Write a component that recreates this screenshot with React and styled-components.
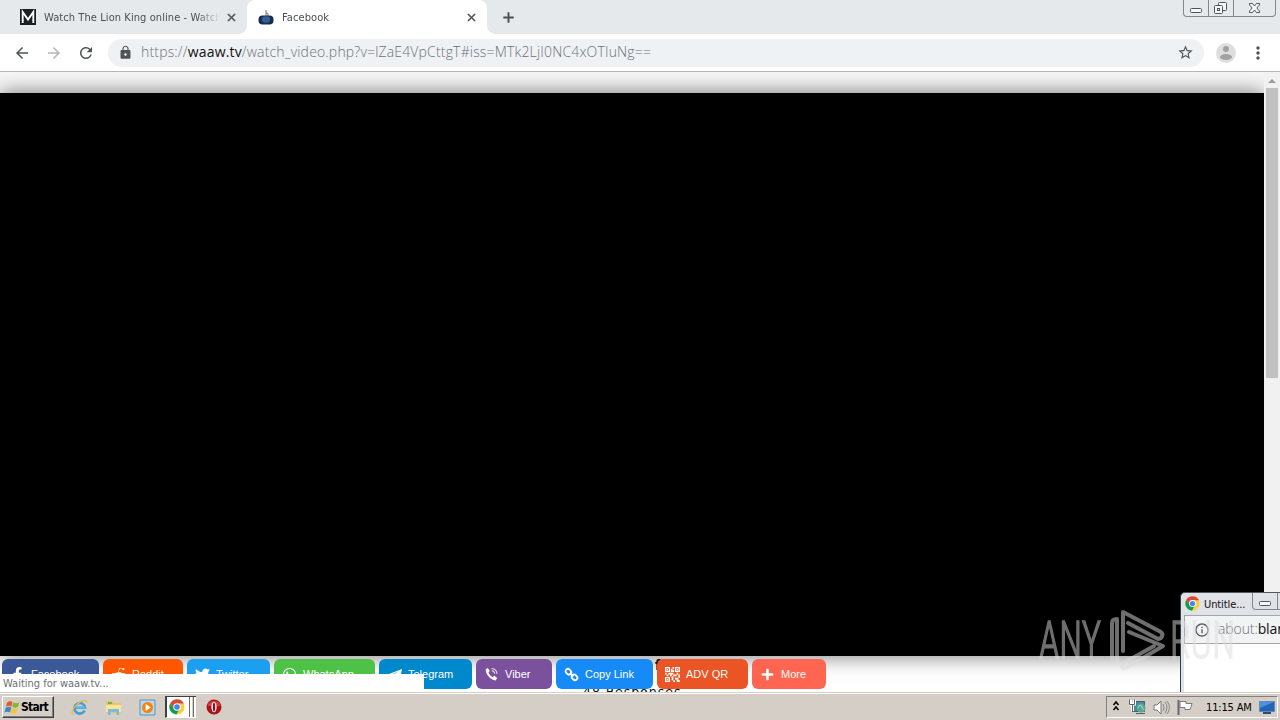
import React from "react";
import styled, { createGlobalStyle } from "styled-components";
import {
  MdArrowBack,
  MdArrowForward,
  MdRefresh,
  MdLock,
  MdStarBorder,
  MdMoreVert,
  MdClose,
  MdAdd,
  MdInfoOutline,
  MdQrCode2
} from "react-icons/md";
import {
  FaFacebookF,
  FaRedditAlien,
  FaTwitter,
  FaWhatsapp,
  FaPlus
} from "react-icons/fa";

const GlobalStyle = createGlobalStyle`
  * {
    box-sizing: border-box;
  }

  body {
    margin: 0;
    overflow: hidden;
  }

  svg {
    display: block;
    flex: none;
  }
`;

const Desktop = styled.div`
  position: relative;
  display: flex;
  flex-direction: column;
  width: 1280px;
  height: 720px;
  overflow: hidden;
  background: #fff;
  font-family: "DejaVu Sans Condensed", "DejaVu Sans", sans-serif;
  font-stretch: condensed;
  font-size: 11px;
`;

const Text = styled.span`
  white-space: nowrap;
  letter-spacing: ${p => p.$spacing || 0}px;
`;

/* browser chrome */

const TabStrip = styled.div`
  display: flex;
  height: 34px;
  background: #e5e9ec;
`;

const Tab = styled.div`
  position: relative;
  display: flex;
  align-items: center;
  width: ${p => p.$width}px;
  padding: 0 9px 0 ${p => p.$left}px;
  color: #4b4f54;
  background: ${p => (p.$active ? "#fff" : "transparent")};
  border-radius: 8px 8px 0 0;

  & > svg:last-child path:last-child {
    stroke: currentColor;
    stroke-width: 1px;
  }

  &::before,
  &::after {
    content: ${p => (p.$active ? '""' : "none")};
    position: absolute;
    bottom: 0;
    width: 8px;
    height: 8px;
  }

  &::before {
    left: -8px;
    background: radial-gradient(circle at 0 0, transparent 7.5px, #fff 8px);
  }

  &::after {
    right: -8px;
    background: radial-gradient(circle at 100% 0, transparent 7.5px, #fff 8px);
  }
`;

const TabTitle = styled(Text)`
  flex: 1;
  margin-left: 8px;
  overflow: hidden;
  mask-image: linear-gradient(
    to right,
    #000 calc(100% - ${p => p.$fade || 0}px),
    transparent calc(100% - ${p => (p.$fade ? 5 : 0)}px)
  );
`;

const NewTab = styled.div`
  padding: 9px 0 0 13px;
  color: #4d5156;

  & path:last-child {
    stroke: currentColor;
    stroke-width: 0.7px;
  }
`;

const Caption = styled.div`
  display: flex;
  width: ${p => p.$width}px;
  height: 17px;
  margin-left: auto;
  margin-right: ${p => p.$right || 0}px;
  border: 1px solid #83878b;
  border-top: 0;
  border-radius: 0 0 4px 4px;

  & > svg + svg {
    border-left: 1px solid #83878b;
  }
`;

const Toolbar = styled.div`
  display: flex;
  align-items: center;
  height: 38px;
  padding-left: 13px;
  border-bottom: 1px solid #b5b6b6;
  color: #505458;

  & > svg {
    margin-right: 14px;
  }
`;

const Omnibox = styled.div`
  display: flex;
  flex: none;
  align-items: center;
  width: 1096px;
  height: 28px;
  margin-left: -1px;
  padding: 0 10px;
  border-radius: 14px;
  background: #eff2f5;
`;

const Url = styled(Text)`
  flex: 1;
  margin: -2px 0 0 8px;
  color: #6d7175;
  font: 300 14px "Open Sans", sans-serif;

  & b {
    color: #111;
    font-weight: 400;
  }
`;

const Avatar = styled.div`
  margin-left: 12px;
  margin-right: 12px;
`;

/* page content */

const Viewport = styled.div`
  display: flex;
  height: 620px;
`;

const Page = styled.div`
  position: relative;
  width: 1264px;
  overflow: hidden;
`;

const Header = styled.div`
  height: 21px;
  background: #f7f7f7;
`;

const Player = styled.div`
  position: relative;
  height: 563px;
  background: #000;
  box-shadow: 0 0 20px rgba(0, 0, 0, 0.55);
`;

const ShareBar = styled.div`
  position: absolute;
  left: 2px;
  top: 587px;
  display: flex;
  gap: 4px;
`;

const ShareButton = styled.div`
  display: flex;
  align-items: center;
  width: ${p => p.$width}px;
  height: 30px;
  padding-left: 8px;
  border-radius: 6px;
  background: ${p => p.$color};
  color: #fff;
  font-family: "Liberation Sans", sans-serif;

  & svg {
    width: 15px;
    height: 15px;
    margin-right: 6px;
  }
`;

const Responses = styled.div`
  position: absolute;
  left: 583px;
  top: 611px;
  font-size: 14px;
  line-height: 18px;
  color: #111;
`;

const Clipped = styled(Responses)`
  left: 655px;
  top: 584px;
  font-weight: 700;
`;

const StatusBubble = styled.div`
  position: absolute;
  left: 0;
  bottom: 0;
  width: 424px;
  height: 18px;
  padding-left: 3px;
  line-height: 19px;
  background: #fff;
  color: #6c6f76;
`;

const Scrollbar = styled.div`
  width: 16px;
  background: #f1f1f1;
`;

const ScrollUp = styled.div`
  width: 0;
  margin: 7px 4px 5px;
  border: 4px solid transparent;
  border-top: 0;
  border-bottom-color: #9a9a9a;
`;

const Thumb = styled.div`
  height: 290px;
  margin: 0 2px 0 2px;
  background: #c1c1c1;
`;

/* popup window */

const Popup = styled.div`
  position: absolute;
  left: 1180px;
  top: 592px;
  width: 120px;
  height: 100px;
  padding-left: 3px;
  border-left: 1px solid #3b3d40;
  border-top: 1px solid #55585b;
  border-radius: 5px 0 0 0;
  background: #dfe2e6;
`;

const PopupTitle = styled.div`
  display: flex;
  height: 22px;
  color: #111;

  & > svg {
    margin: 3px 4px 0 1px;
  }

  & > span {
    line-height: 23px;
  }
`;

const PopupUrl = styled.div`
  display: flex;
  align-items: center;
  height: 29px;
  padding-left: 9px;
  border: 1px solid #a4a7aa;
  background: #f2f3f5;
  color: #55595d;
`;

const PopupBody = styled.div`
  height: 48px;
  background: #fff;
`;

const Watermark = styled.svg`
  position: absolute;
  left: 1036px;
  top: 606px;
`;

/* taskbar */

const Taskbar = styled.div`
  display: flex;
  align-items: center;
  height: 28px;
  border-top: 1px solid #d4d0c8;
  box-shadow: inset 0 1px #fff;
  background: #d4cec7;
  padding-top: 1px;
`;

const StartButton = styled.div`
  display: flex;
  align-items: center;
  width: 52px;
  height: 22px;
  margin-left: 2px;
  padding-left: 1px;
  border: 1px solid;
  border-color: #fff #404040 #404040 #fff;
  box-shadow: inset -1px -1px #808080;
  color: #000;
  font-size: 12px;
  font-weight: 700;
`;

const QuickLaunch = styled.div`
  display: flex;
  align-items: center;
  margin-left: 17px;
  gap: 17px;
`;

const RunningApp = styled.div`
  display: flex;
  align-items: center;
  width: 31px;
  height: 22px;
  margin: 0 -7px 0 -8px;
  border-top: 1px solid #404040;
  border-left: 2px solid #404040;
  border-bottom: 1px solid #fff;
  background: linear-gradient(
    to right,
    #fff 22px,
    #706d69 22px 23px,
    #fff 23px 25px,
    #d4cec7 25px 26px,
    #706d69 26px 27px,
    #fff 27px 29px
  );

  & > svg {
    margin-left: 2px;
  }
`;

const Tray = styled.div`
  display: flex;
  align-items: center;
  width: 172px;
  height: 22px;
  margin-left: auto;
  margin-right: 2px;
  padding-left: 5px;
  border: 1px solid;
  border-color: #808080 #fff #fff #808080;
  color: #000;

  & > span {
    margin: 0 7px 0 12px;
  }
`;

const ChromeLogo = ({ size = 16 }) => (
  <svg width={size} height={size} viewBox="0 0 16 16">
    <circle cx="8" cy="8" r="7.6" fill="#ffcd40" />
    <path d="M1.3 4.2A7.7 7.7 0 0 1 14.9 4.5H8L4.8 9.7z" fill="#df4937" />
    <path d="M1.3 4.2A7.7 7.7 0 0 0 7.4 15.6L10.8 9.7H4.9z" fill="#109d58" />
    <circle cx="8" cy="8" r="3.7" fill="#fff" />
    <circle cx="8" cy="8" r="2.8" fill="#4286f5" />
  </svg>
);

const MinimizeGlyph = ({ width = 24 }) => (
  <svg width={width} height="16">
    <rect
      x="6.5"
      y="8.5"
      width="11"
      height="4"
      rx="1"
      fill="#f5f6f7"
      stroke="#50545d"
    />
  </svg>
);

const RestoreGlyph = () => (
  <svg width="25" height="16" fill="#f5f6f7" stroke="#50545d">
    <rect x="9.5" y="2.5" width="8" height="8" rx="1" />
    <rect x="5.5" y="5.5" width="8" height="8" rx="1" />
    <rect x="8.5" y="8.5" width="2" height="2" />
  </svg>
);

const CloseGlyph = () => (
  <svg width="42" height="16">
    <path
      d="M15.5 3.5h3l2 2.5 2-2.5h3V5l-2.7 3 2.7 3v1.5h-3l-2-2.5-2 2.5h-3V11l2.7-3-2.7-3z"
      fill="#f5f6f7"
      stroke="#50545d"
    />
  </svg>
);

const MovieFavicon = () => (
  <svg width="16" height="16" viewBox="0 0 16 16">
    <path d="M0 0h16v16H0z" fill="#1b1f22" />
    <path d="M2.7 14V3L8 10.500 13.300 3v11" fill="none" stroke="#fff" strokeWidth="1.9" />
  </svg>
);

const HookahFavicon = () => (
  <svg width="16" height="16" viewBox="0 0 16 16">
    <path d="M8 1v7M8 3.500l2 1.500v4" fill="none" stroke="#8b9097" strokeWidth="1.2" />
    <rect x=".5" y="6.5" width="15" height="9" rx="4" fill="#182d49" />
    <ellipse cx="8" cy="10.5" rx="4.2" ry="3.2" fill="#315f98" />
  </svg>
);

const TelegramGlyph = () => (
  <svg viewBox="0 0 16 16" fill="#fff">
    <path d="M0 8.200 16 2l-2.500 12.500-5-3.500-2.500 2.300-.5-4.200L13 4 4 8.900z" />
  </svg>
);

const ViberGlyph = () => (
  <svg viewBox="0 0 16 16" fill="none" stroke="#fff">
    <path
      d="M2 2.200 4 1l2.200 3-1.400 1.800C5.800 8.300 7 9.600 9.200 10.600L11 9.300l3 2.300-1.300 2.600c-1.500 1-9.600-3.200-10.700-9.700z"
      fill="#fff"
      stroke="none"
    />
    <path
      d="M8 1.500c3.600.2 5.800 2.500 5.800 6M8.300 4c2 .2 3 1.200 3.100 3.200"
      strokeWidth="1.1"
      opacity="0.8"
    />
  </svg>
);

const ChainGlyph = () => (
  <svg viewBox="0 0 16 16" fill="none" stroke="#fff" strokeWidth="1.9">
    <rect x="1.5" y="2.5" width="6.5" height="5" rx="2.5" transform="rotate(45 4.7 5)" />
    <rect x="8" y="8.5" width="6.5" height="5" rx="2.5" transform="rotate(45 11.2 11)" />
    <path d="m6 6.500 4 3.500" />
  </svg>
);

const WindowsFlag = () => (
  <svg width="17" height="17" viewBox="0 0 17 16">
    <path d="M3 3c2-1.500 4-1.500 5.500-.3L7.500 7C5.800 6 4 6.200 2 7.200z" fill="#e9592b" />
    <path d="M9.300 3c2 1.200 4 1 6-.2l-1.300 4.500c-2 1.200-4 1.200-5.700 0z" fill="#7db83d" />
    <path d="M1.700 8.300c2-1.200 4-1.200 5.600-.2l-1.300 5C4.500 12 2.500 12 .5 13z" fill="#3b86cf" />
    <path d="M8 8.400c2 1.200 4 1 5.800 0l-1.400 4.800c-2 1.200-4 1-5.700 0z" fill="#fbc62d" />
  </svg>
);

const ExplorerIcon = () => (
  <svg width="17" height="17" viewBox="0 0 17 17" fill="none">
    <path
      d="M13.700 11.500a5.300 5.300 0 1 1 .4-3H5"
      stroke="#3d9fde"
      strokeWidth="2.6"
    />
    <path d="M5 8h8.500" stroke="#73c4f1" strokeWidth="1.3" />
    <path d="M3 15.500C-.5 15 1 9.500 6.500 5 11 1.200 16 .2 15.700 4" stroke="#edba36" strokeWidth="1.2" />
  </svg>
);

const FolderIcon = () => (
  <svg width="17" height="17" viewBox="0 0 17 17">
    <path d="M1 2h6l1.500 2H16v10H1z" fill="#eac65f" />
    <path d="M3 3h4v2H3z" fill="#67b45b" />
    <path d="M1 6h15v7H1z" fill="#f9e59a" />
    <path d="M3 16v-6h11v6h-2.500v-3h-6v3z" fill="#79bce0" />
  </svg>
);

const MediaIcon = () => (
  <svg width="17" height="17" viewBox="0 0 17 17">
    <path d="M1 1h15v15H1z" fill="#b9d8ed" stroke="#5893be" />
    <circle cx="8.5" cy="8.5" r="5.5" fill="#f18412" />
    <path d="m6.700 5 5 3.500-5 3.500z" fill="#fff" />
  </svg>
);

const OperaIcon = () => (
  <svg width="16" height="16" viewBox="0 0 16 16">
    <circle cx="8" cy="8" r="7.5" fill="#a8141a" />
    <path d="M2 5C4 1 12 1 14 5v2H2z" fill="#d43c40" />
    <ellipse cx="8" cy="8" rx="2.6" ry="5.3" fill="#fff" />
    <ellipse cx="8" cy="8" rx="1.2" ry="4.5" fill="#971016" />
  </svg>
);

const TrayIcons = () => (
  <svg width="82" height="20" fill="none">
    <path d="m1.500 8 2.500-3 2.500 3M1.500 13 4 10l2.500 3" stroke="#000" strokeWidth="1.5" />
    <path d="M23.500 4.500h9v10h-11v-7" fill="#438ba7" stroke="#555b5e" />
    <path d="M24 16.500h9" stroke="#555b5e" />
    <circle cx="29" cy="11" r="4.5" fill="#58a994" />
    <path d="M26 11c1-4 4-3 4-1s2 2 2 3" stroke="#b2dfd0" />
    <path d="M18.500 3v4h4V3M20.500 7v7" stroke="#fff" strokeWidth="3" />
    <path d="M17.500 2.500v5h5v-5M20.500 7v8" stroke="#62666a" />
    <path d="M42 8h3l4-4v13l-4-4h-3z" fill="#fff" stroke="#777" />
    <path d="M51 7q2 3 0 7M53 5q4 5 0 11M55 4q5 7 0 13" stroke="#888" />
    <path d="M66.500 3v15" stroke="#65696d" strokeWidth="2" />
    <path d="M68 4.500h6v2h6l-2 6h-5v-2h-5z" fill="#fff" stroke="#777b7e" />
  </svg>
);

const MonitorIcon = () => (
  <svg width="16" height="16" viewBox="0 0 16 16">
    <path d="M.5 2.500h15v10H.5z" fill="#2463b7" stroke="#6389ae" />
    <path d="M1 3h14L1 9z" fill="#4c92dc" />
    <path d="M4 13h8v2H4z" fill="#30496b" />
  </svg>
);

const shares = [
  { name: "Facebook", icon: <FaFacebookF />, color: "#3b5998", width: 97 },
  { name: "Reddit", icon: <FaRedditAlien />, color: "#ff5700", width: 80 },
  { name: "Twitter", icon: <FaTwitter />, color: "#1b9ff1", width: 83 },
  { name: "WhatsApp", icon: <FaWhatsapp />, color: "#4dc247", width: 101 },
  { name: "Telegram", icon: <TelegramGlyph />, color: "#0088cc", width: 93 },
  { name: "Viber", icon: <ViberGlyph />, color: "#7b519d", width: 76 },
  { name: "Copy Link", icon: <ChainGlyph />, color: "#168bf8", width: 97 },
  { name: "ADV QR", icon: <MdQrCode2 viewBox="3 3 18 18" />, color: "#eb5424", width: 91 },
  { name: "More", icon: <FaPlus viewBox="-64 -32 576 576" />, color: "#ff6550", width: 74 }
];

export default () => (
  <Desktop>
    <GlobalStyle />
    <TabStrip>
      <Tab $width={247} $left={20}>
        <MovieFavicon />
        <TabTitle $fade={28} $spacing={0.08}>
          Watch The Lion King online - Watch Movies
        </TabTitle>
        <MdClose size={13} />
      </Tab>
      <Tab $active $width={240} $left={11}>
        <HookahFavicon />
        <TabTitle $spacing={0.1}>Facebook</TabTitle>
        <MdClose size={13} />
      </Tab>
      <NewTab>
        <MdAdd size={17} />
      </NewTab>
      <Caption $width={93} $right={4}>
        <MinimizeGlyph />
        <RestoreGlyph />
        <CloseGlyph />
      </Caption>
    </TabStrip>
    <Toolbar>
      <MdArrowBack size={18} />
      <MdArrowForward size={18} color="#b4b6b8" />
      <MdRefresh size={18} />
      <Omnibox>
        <MdLock size={15} />
        <Url $spacing={0.17}>
          https://<b>waaw.tv</b>
          /watch_video.php?v=lZaE4VpCttgT#iss=MTk2LjI0NC4xOTIuNg==
        </Url>
        <MdStarBorder size={17} />
      </Omnibox>
      <Avatar>
        <svg width="20" height="20">
          <circle cx="10" cy="10" r="10" fill="#dedede" />
          <circle cx="10" cy="6" r="3" fill="#a2a2a2" />
          <ellipse cx="10" cy="14" rx="6" ry="3" fill="#a2a2a2" />
        </svg>
      </Avatar>
      <MdMoreVert size={20} />
    </Toolbar>
    <Viewport>
      <Page>
        <Header />
        <Player />
        <Clipped>f</Clipped>
        <Responses>
          <Text $spacing={0.95}>48 Responses</Text>
        </Responses>
        <ShareBar>
          {shares.map(s => (
            <ShareButton key={s.name} $width={s.width} $color={s.color}>
              {s.icon}
              <Text>{s.name}</Text>
            </ShareButton>
          ))}
        </ShareBar>
        <StatusBubble>
          <Text>Waiting for waaw.tv...</Text>
        </StatusBubble>
      </Page>
      <Scrollbar>
        <ScrollUp />
        <Thumb />
      </Scrollbar>
    </Viewport>
    <Taskbar>
      <StartButton>
        <WindowsFlag />
        <Text $spacing={-0.75}>Start</Text>
      </StartButton>
      <QuickLaunch>
        <ExplorerIcon />
        <FolderIcon />
        <MediaIcon />
        <RunningApp>
          <ChromeLogo />
        </RunningApp>
        <OperaIcon />
      </QuickLaunch>
      <Tray>
        <TrayIcons />
        <Text $spacing={-0.15}>11:15 AM</Text>
        <MonitorIcon />
      </Tray>
    </Taskbar>
    <Popup>
      <PopupTitle>
        <ChromeLogo size={15} />
        <Text $spacing={-0.1}>Untitle...</Text>
        <Caption $width={48}>
          <MinimizeGlyph />
          <RestoreGlyph />
        </Caption>
      </PopupTitle>
      <PopupUrl>
        <MdInfoOutline size={16} />
        <Url $spacing={-0.1}>
          about:<b>blank</b>
        </Url>
      </PopupUrl>
      <PopupBody />
    </Popup>
    <Watermark width="202" height="72" opacity="0.5">
      <g
        fill="#ddd"
        stroke="#ddd"
        strokeWidth="1.5"
        fontFamily="Roboto"
        fontSize="51"
        fontWeight="300"
      >
        <text x="3" y="52" textLength="62" lengthAdjust="spacingAndGlyphs">
          ANY
        </text>
        <text x="134" y="52" textLength="65" lengthAdjust="spacingAndGlyphs">
          RUN
        </text>
      </g>
      <g fill="none" stroke="#ddd" strokeWidth="4" strokeLinejoin="round" strokeLinecap="round">
        <path d="M76 53V17q0-4 5-4v43" />
        <path d="M87 45V6l38 20q3 3 0 6l-3 1-30-16" />
        <path d="M93 26l34 14-37 22q-5 2-4-4l32-18" />
      </g>
    </Watermark>
  </Desktop>
);
